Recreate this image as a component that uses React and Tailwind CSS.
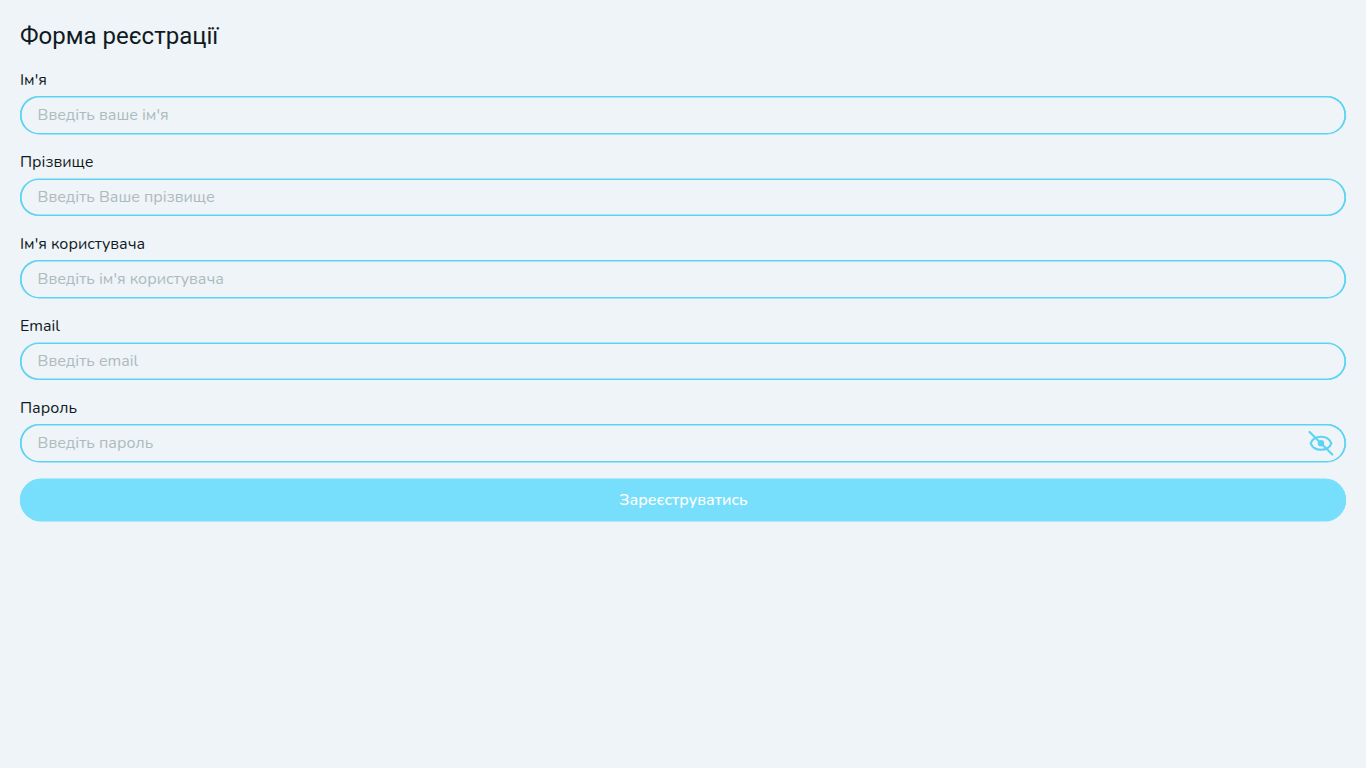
const lower = 'mt-1 h-[38px] shadow-[inset_0_0.3px_0_1.3px_#5cd3f3,inset_1.6px_0_0_0_#5cd3f3,inset_-1.6px_0_0_0_#5cd3f3,0_0.4px_0_0_#5cd3f3]';
const upper = 'mt-[5px] h-[37px] pb-px shadow-[inset_0_-0.3px_0_1.3px_#5cd3f3,inset_1.6px_0_0_0_#5cd3f3,inset_-1.6px_0_0_0_#5cd3f3,0_-0.4px_0_0_#5cd3f3]';

const fields = [
  { label: "Ім'я", hint: "Введіть ваше ім'я", box: lower },
  { label: 'Прізвище', hint: 'Введіть Ваше прізвище', box: upper },
  { label: "Ім'я користувача", hint: "Введіть ім'я користувача", box: lower },
  { label: 'Email', hint: 'Введіть email', box: upper },
  { label: 'Пароль', hint: 'Введіть пароль', password: true, box: lower },
];

function EyeOff() {
  return (
    <svg width="26" height="26" viewBox="0 0 26 26" fill="none" stroke="#5cd3f3" strokeWidth="2.1" strokeLinecap="round">
      <path d="M2.7 13.3C4.3 9 8.6 6.7 13 6.7S21.7 9 23.3 13.3C21.7 17.5 17.4 19.7 13 19.7S4.3 17.5 2.7 13.3Z" />
      <circle cx="13" cy="13.3" r="3.2" fill="#5cd3f3" stroke="none" />
      <path d="M1.6 1.9 24.3 24.6" />
    </svg>
  );
}

export default function App() {
  return (
    <div className="min-h-screen bg-[#eef4f7] px-5 pt-5 font-['Nunito','Open_Sans',sans-serif] text-base text-[#111a1e]">
      <h1 className="h-8 font-['Roboto',sans-serif] text-2xl leading-8">Форма реєстрації</h1>
      <form className="mt-4 flex flex-col [font-kerning:none]">
        {fields.map((f) => (
          <div key={f.label} className="h-[82px]">
            <label className="block h-6 leading-6">{f.label}</label>
            <div className={`flex items-center rounded-full pr-3 pl-[17.6px] ${f.box}`}>
              <input
                type={f.password ? 'password' : 'text'}
                placeholder={f.hint}
                className="h-6 min-w-0 flex-1 bg-transparent leading-6 outline-none [font-kerning:none] placeholder:text-[#adbbbd]"
              />
              {f.password && <EyeOff />}
            </div>
          </div>
        ))}
        <button
          type="button"
          className="mt-px h-[42px] rounded-full bg-[#77dffc] pl-px text-center font-medium text-white shadow-[0_0.5px_0_0_#77dffc,0_-0.5px_0_0_#77dffc]"
        >
          Зареєструватись
        </button>
      </form>
    </div>
  );
}
